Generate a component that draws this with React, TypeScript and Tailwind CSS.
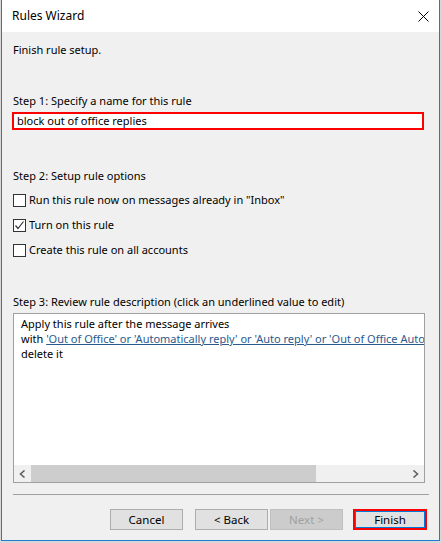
import React from "react";

const font = { fontFamily: '"Noto Sans", "Open Sans", sans-serif' };

function Checkbox({ checked, label }: { checked?: boolean; label: string }) {
  return (
    <div className="flex h-[16px] items-center">
      <div className="ml-[11px] flex h-[13px] w-[13px] items-center justify-center border border-[#333333] bg-white">
        {checked && (
          <svg width="11" height="11" viewBox="0 0 11 11">
            <path d="M1.5 5.5 L4 8.5 L9.5 1.5" fill="none" stroke="#333333" strokeWidth="1.2" />
          </svg>
        )}
      </div>
      <span className="ml-[3px]">{label}</span>
    </div>
  );
}

function Button({ label, variant }: { label: string; variant?: "disabled" | "finish" }) {
  if (variant === "finish") {
    return (
      <div className="h-[21px] w-[74px] border-2 border-[#ff0000]">
        <div className="flex h-full w-full items-center justify-center border border-[#0078d7] bg-[#e1e1e1]">
          {label}
        </div>
      </div>
    );
  }
  if (variant === "disabled") {
    return (
      <div className="flex h-[21px] w-[73px] items-center justify-center border border-[#bfbfbf] bg-[#cccccc] text-[#a0a0a0]">
        {label}
      </div>
    );
  }
  return (
    <div className="flex h-[21px] w-[73px] items-center justify-center border border-[#adadad] bg-[#e1e1e1]">
      {label}
    </div>
  );
}

export default function App() {
  return (
    <div className="h-[543px] w-[441px] overflow-hidden bg-[#d8d8d8] text-[11px] leading-[16px] text-black" style={font}>
      <div className="ml-[1px] flex h-[541px] w-[439px] flex-col border-x border-b border-[#1e7bd0] bg-[#f0f0f0]">
        {/* title bar */}
        <div className="flex h-[32px] shrink-0 items-center justify-between bg-white pl-[10px] pr-[10px]">
          <span className="text-[12px]">Rules Wizard</span>
          <svg width="11" height="11" viewBox="0 0 11 11">
            <path d="M0.5 0.5 L10.5 10.5 M10.5 0.5 L0.5 10.5" stroke="#000" strokeWidth="1" />
          </svg>
        </div>

        <div className="flex flex-col">
          <div className="ml-[11px] mt-[10px]">Finish rule setup.</div>

          <div className="ml-[11px] mt-[35px]">Step 1: Specify a name for this rule</div>
          <div className="ml-[10px] mt-[3px] flex h-[18px] w-[412px] items-center border-2 border-[#ff0000] bg-white pl-[3px]">
            block out of office replies
          </div>

          <div className="ml-[11px] mt-[38px]">Step 2: Setup rule options</div>
          <div className="mt-[8px] flex flex-col gap-[9px]">
            <Checkbox label={'Run this rule now on messages already in "Inbox"'} />
            <Checkbox checked label="Turn on this rule" />
            <Checkbox label="Create this rule on all accounts" />
          </div>

          <div className="ml-[11px] mt-[36px]">Step 3: Review rule description (click an underlined value to edit)</div>

          <div className="ml-[11px] mt-[3px] flex h-[170px] w-[412px] flex-col border border-[#a0a0a0] bg-white">
            <div className="flex-1 overflow-hidden whitespace-nowrap pl-[7px] pt-[2px] leading-[15px]">
              <div>Apply this rule after the message arrives</div>
              <div>
                with{" "}
                <span className="text-[#2a5a8c] underline decoration-[#2a5a8c] underline-offset-1">
                  'Out of Office' or 'Automatically reply' or 'Auto reply' or 'Out of Office AutoReply'
                </span>
              </div>
              <div>delete it</div>
            </div>
            {/* horizontal scrollbar */}
            <div className="flex h-[17px] shrink-0 items-center bg-[#f0f0f0]">
              <div className="flex h-full w-[17px] items-center justify-center">
                <svg width="7" height="8" viewBox="0 0 7 8">
                  <path d="M5.5 0.5 L1.5 4 L5.5 7.5" fill="none" stroke="#606060" strokeWidth="1.6" />
                </svg>
              </div>
              <div className="h-full w-[285px] bg-[#cdcdcd]" />
              <div className="flex-1" />
              <div className="flex h-full w-[17px] items-center justify-center">
                <svg width="7" height="8" viewBox="0 0 7 8">
                  <path d="M1.5 0.5 L5.5 4 L1.5 7.5" fill="none" stroke="#606060" strokeWidth="1.6" />
                </svg>
              </div>
            </div>
          </div>

          <div className="ml-[11px] mt-[11px] h-px w-[416px] bg-[#a0a0a0]" />

          <div className="mt-[14px] flex items-center text-[11.5px]">
            <div className="ml-[108px]">
              <Button label="Cancel" />
            </div>
            <div className="ml-[12px]">
              <Button label="< Back" />
            </div>
            <div className="ml-[2px]">
              <Button label="Next >" variant="disabled" />
            </div>
            <div className="ml-[10px]">
              <Button label="Finish" variant="finish" />
            </div>
          </div>
        </div>
      </div>
    </div>
  );
}
